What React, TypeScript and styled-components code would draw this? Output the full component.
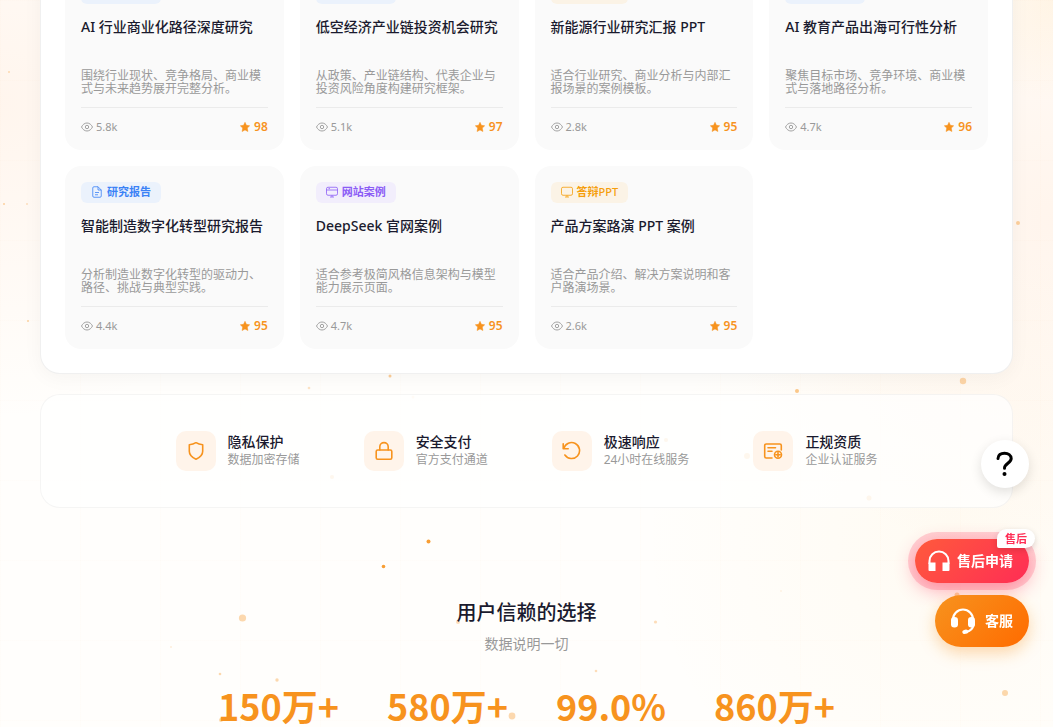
import React from "react";
import styled, { createGlobalStyle } from "styled-components";

const Global = createGlobalStyle`
  *, *::before, *::after { box-sizing: border-box; }
  html, body { margin: 0; height: 100%; }
  body {
    overflow: hidden;
    background: #fffdfa;
    color: #1a1a2e;
    font-family: "Noto Sans", "Noto Sans CJK SC", sans-serif;
    font-size: 14px;
  }
  h2, h3, h4, p, ul { margin: 0; padding: 0; }
  ul { list-style: none; }
`;

const Page = styled.div`
  position: relative;
  height: 100vh;
  overflow: hidden;
`;

const Backdrop = styled.div`
  position: absolute;
  inset: 0;
  background:
    linear-gradient(90deg, rgba(247, 147, 30, 0.012) 1px, transparent 1px) 0 0 / 80px 80px,
    linear-gradient(rgba(247, 147, 30, 0.012) 1px, transparent 1px) 0 0 / 80px 80px,
    radial-gradient(circle at 0% 14%, rgba(255, 170, 110, 0.1), transparent 26%),
    radial-gradient(circle at 100% 0%, rgba(255, 190, 80, 0.1), transparent 8%),
    radial-gradient(circle at 100% 30%, rgba(255, 170, 110, 0.11), transparent 30%),
    radial-gradient(circle at 90% 74%, rgba(255, 200, 90, 0.06), transparent 28%),
    #fffefc;
`;

const Particles = styled.svg`
  position: absolute;
  inset: 0;
  width: 100%;
  height: 100%;
  pointer-events: none;
`;

const Content = styled.main`
  position: relative;
  display: flex;
  flex-direction: column;
  gap: 20px;
  margin-top: -58px;
  padding: 0 40px;
`;

const CasePanel = styled.section`
  padding: 24px;
  background: #fff;
  border: 1px solid rgba(0, 0, 0, 0.06);
  border-radius: 20px;
  box-shadow: 0 4px 20px rgba(0, 0, 0, 0.04);
`;

const CaseGrid = styled.ul`
  display: grid;
  grid-template-columns: repeat(4, 1fr);
  gap: 16px;
`;

const CaseCard = styled.li`
  display: flex;
  flex-direction: column;
  align-items: flex-start;
  padding: 16px;
  background: #fafafa;
  border-radius: 16px;
`;

const Tag = styled.span<{ $color: string; $bg: string }>`
  display: inline-flex;
  align-items: center;
  height: 21px;
  padding: 0 10px 2px;
  border-radius: 6px;
  background: ${(p) => p.$bg};
  color: ${(p) => p.$color};
  font-size: 11px;
  font-weight: 600;
  line-height: 19px;

  svg { margin-right: 4px; }
`;

const Latin = styled.span`
  font-weight: 500;
`;

const CaseTitle = styled.h3`
  height: 40px;
  margin-top: 13px;
  font-size: 14px;
  font-weight: 500;
  line-height: 20px;
`;

const CaseText = styled.p`
  height: 26px;
  margin-top: 12px;
  color: #999;
  font-size: 12px;
  line-height: 13px;
`;

const CaseFooter = styled.div`
  display: flex;
  align-items: center;
  justify-content: space-between;
  width: 100%;
  margin-top: 12px;
  padding-top: 11px;
  border-top: 1px solid rgba(0, 0, 0, 0.06);
  line-height: 15px;
`;

const Views = styled.span`
  display: flex;
  align-items: center;
  gap: 3px;
  color: #999;
  font-size: 11px;
`;

const Score = styled.span`
  display: flex;
  align-items: center;
  gap: 4px;
  color: #f7931e;
  font-size: 12px;
  font-weight: 600;
`;

const TrustPanel = styled.ul`
  display: flex;
  justify-content: center;
  gap: 64px;
  padding: 36px;
  background: rgba(255, 255, 255, 0.7);
  border: 1px solid rgba(0, 0, 0, 0.04);
  border-radius: 20px;
`;

const TrustItem = styled.li`
  display: flex;
  align-items: center;
  gap: 12px;
`;

const TrustIcon = styled.span`
  display: flex;
  align-items: center;
  justify-content: center;
  width: 40px;
  height: 40px;
  border-radius: 10px;
  background: #fff4ea;
`;

const TrustTitle = styled.h4`
  font-size: 14px;
  font-weight: 500;
  line-height: 18px;
`;

const TrustText = styled.p`
  color: #999;
  font-size: 12px;
  line-height: 18px;
`;

const Stats = styled.section`
  display: flex;
  flex-direction: column;
  align-items: center;
  padding-top: 70px;
`;

const StatsTitle = styled.h2`
  font-size: 20px;
  font-weight: 500;
  line-height: 30px;
`;

const StatsText = styled.p`
  margin-top: 6px;
  color: #999;
  font-size: 14px;
  line-height: 20px;
`;

const StatsRow = styled.ul`
  display: flex;
  gap: 48px;
  margin-top: 26px;
  color: #f7931e;
  font-family: "Noto Sans CJK SC", sans-serif;
  font-size: 36px;
  font-weight: 700;
  line-height: 50px;
`;

const Floating = styled.aside`
  position: fixed;
  right: 24px;
  bottom: 80px;
  display: flex;
  flex-direction: column;
  align-items: flex-end;
  gap: 12px;
`;

const HelpButton = styled.button`
  display: flex;
  align-items: center;
  justify-content: center;
  width: 48px;
  height: 48px;
  margin-bottom: 39px;
  padding: 0;
  border: 0;
  border-radius: 50%;
  background: #fff;
  box-shadow: 0 4px 12px rgba(0, 0, 0, 0.12);
`;

const Pill = styled.button<{ $kind: "refund" | "service" }>`
  position: relative;
  display: flex;
  align-items: center;
  gap: ${(p) => (p.$kind === "refund" ? 6 : 8)}px;
  height: ${(p) => (p.$kind === "refund" ? 44 : 52)}px;
  padding: 0 16px 0 ${(p) => (p.$kind === "refund" ? 12 : 14)}px;
  border: 0;
  border-radius: 26px;
  background: ${(p) =>
    p.$kind === "refund"
      ? "linear-gradient(135deg, #ff5a3c, #ff2d55)"
      : "linear-gradient(135deg, #f7931e, #ff6b00)"};
  box-shadow: ${(p) =>
    p.$kind === "refund"
      ? "0 0 0 7px rgba(255, 45, 85, 0.2), 0 6px 20px rgba(255, 45, 85, 0.45)"
      : "0 6px 16px rgba(247, 147, 30, 0.35)"};
  color: #fff;
  font-family: inherit;
  font-size: 14px;
  font-weight: 700;
  line-height: 20px;
`;

const Badge = styled.span`
  position: absolute;
  top: -10px;
  right: -6px;
  height: 19px;
  padding: 0 8px;
  border-radius: 10px 10px 10px 2px;
  background: #fff;
  box-shadow: 0 2px 6px rgba(0, 0, 0, 0.14);
  color: #ff2d55;
  font-size: 11px;
  line-height: 19px;
`;

type Kind = "report" | "site" | "ppt";

const kinds: Record<Kind, { label: string; latin?: string; color: string; bg: string }> = {
  report: { label: "研究报告", color: "#3b82f6", bg: "#ebf2fc" },
  site: { label: "网站案例", color: "#8b5cf6", bg: "#f2eefc" },
  ppt: { label: "答辩", latin: "PPT", color: "#f59e0b", bg: "#fbf3e6" },
};

const cases: { kind: Kind; title: string; text: string; views: string; score: number }[] = [
  { kind: "report", title: "AI 行业商业化路径深度研究", text: "围绕行业现状、竞争格局、商业模式与未来趋势展开完整分析。", views: "5.8k", score: 98 },
  { kind: "report", title: "低空经济产业链投资机会研究", text: "从政策、产业链结构、代表企业与投资风险角度构建研究框架。", views: "5.1k", score: 97 },
  { kind: "ppt", title: "新能源行业研究汇报 PPT", text: "适合行业研究、商业分析与内部汇报场景的案例模板。", views: "2.8k", score: 95 },
  { kind: "report", title: "AI 教育产品出海可行性分析", text: "聚焦目标市场、竞争环境、商业模式与落地路径分析。", views: "4.7k", score: 96 },
  { kind: "report", title: "智能制造数字化转型研究报告", text: "分析制造业数字化转型的驱动力、路径、挑战与典型实践。", views: "4.4k", score: 95 },
  { kind: "site", title: "DeepSeek 官网案例", text: "适合参考极简风格信息架构与模型能力展示页面。", views: "4.7k", score: 95 },
  { kind: "ppt", title: "产品方案路演 PPT 案例", text: "适合产品介绍、解决方案说明和客户路演场景。", views: "2.6k", score: 95 },
];

const particles: [number, number, number, number][] = [
  [9, 72, 1, 0.3], [4, 204, 1, 0.4], [27, 204, 1, 0.25], [28, 321, 1, 0.4],
  [1018, 223, 2, 0.4], [390, 376, 1.5, 0.45], [309, 388, 1.3, 0.25], [413, 397, 1.5, 0.12],
  [797, 391, 2, 0.5], [963, 381, 3.2, 0.35], [428.5, 541.5, 2, 0.9], [383.5, 566.5, 1.8, 0.9],
  [242.5, 618, 3.6, 0.35], [458, 622, 2, 0.3], [655.5, 622, 1.6, 0.3], [781, 591, 0.7, 0.2],
  [220, 674, 1.3, 0.35], [277, 680, 1.7, 0.35], [596, 671, 1.3, 0.3], [512, 716, 3.4, 0.35],
  [221, 720, 2, 0.35], [1005, 693, 3, 0.35], [957, 595, 2.5, 0.4], [171, 647, 1, 0.15],
];

const fadedParticles: [number, number, number][] = [
  [332, 477, 2], [666, 440, 2], [747, 456, 3], [869, 498, 2.5],
];

function TagIcon({ kind }: { kind: Kind }) {
  return (
    <svg width="12" height="12" viewBox="0 0 24 24" fill="none" stroke="currentColor" strokeWidth="1.6" strokeLinejoin="round" aria-hidden="true">
      {kind === "report" ? (
        <path d="M14 1.5H6A2.5 2.5 0 0 0 3.5 4v16A2.5 2.5 0 0 0 6 22.5h12a2.5 2.5 0 0 0 2.5-2.5V8zM14 1.5V8h6.5M8 13h8M8 17.5h6" />
      ) : (
        <>
          <rect x="1" y="2.5" width="22" height="16" rx="3" />
          <path d="M8 22h8M12 18.5V22" />
          {kind === "site" && <path d="M1 8h22M5 5.3h3" />}
        </>
      )}
    </svg>
  );
}

function EyeIcon() {
  return (
    <svg width="12" height="12" viewBox="0 0 12 12" fill="none" stroke="currentColor" strokeWidth="0.9" aria-hidden="true">
      <path d="M.5 6C1.7 3.6 3.6 2 6 2s4.3 1.6 5.5 4C10.3 8.4 8.4 10 6 10S1.7 8.4.5 6z" />
      <circle cx="6" cy="6" r="1.7" />
    </svg>
  );
}

function StarIcon() {
  return (
    <svg width="10" height="10" viewBox="0 0 10 10" fill="currentColor" stroke="currentColor" strokeWidth="0.5" strokeLinejoin="round" aria-hidden="true">
      <path d="M5 .3l1.4 3 3.3.5-2.4 2.3.6 3.4L5 7.9 2.1 9.5l.6-3.4L.3 3.8l3.3-.5z" />
    </svg>
  );
}

const trustItems = [
  {
    title: "隐私保护",
    text: "数据加密存储",
    icon: <path d="M10 1.7c2 1.3 4.2 1.9 6.7 2v6.5c0 3.6-2.7 6.2-6.7 8-4-1.8-6.7-4.4-6.7-8V3.7c2.5-.1 4.7-.7 6.7-2z" />,
  },
  {
    title: "安全支付",
    text: "官方支付通道",
    icon: (
      <>
        <rect x="2.2" y="9" width="15.6" height="9.2" rx="1.5" />
        <path d="M5.8 9V5.8a4.2 4.2 0 0 1 8.4 0V9" />
      </>
    ),
  },
  {
    title: "极速响应",
    text: "24小时在线服务",
    icon: <path d="M1.2 2.8v5h5M1.8 7.600A8 8 0 1 1 2.9 14" />,
  },
  {
    title: "正规资质",
    text: "企业认证服务",
    icon: (
      <>
        <path d="M18.3 9V4.5a1.5 1.5 0 0 0-1.5-1.5H3.2a1.5 1.5 0 0 0-1.5 1.5v11A1.5 1.5 0 0 0 3.2 17H9M5 6.8h7.5M5 10.2h4" />
        <circle cx="15" cy="13.7" r="3.5" />
        <path d="M15 11.5v4.4M12.8 13.7h4.4" />
      </>
    ),
  },
];

const stats = ["150万+", "580万+", "99.0%", "860万+"];

export default function App() {
  return (
    <Page>
      <Global />
      <Backdrop />
      <Particles aria-hidden="true">
        {particles.map(([x, y, r, o], i) => (
          <circle key={i} cx={x} cy={y} r={r} fill="#f7931e" opacity={o} />
        ))}
      </Particles>
      <Content>
        <CasePanel>
          <CaseGrid>
            {cases.map((c) => {
              const kind = kinds[c.kind];
              return (
                <CaseCard key={c.title}>
                  <Tag $color={kind.color} $bg={kind.bg}>
                    <TagIcon kind={c.kind} />
                    {kind.label}
                    {kind.latin && <Latin>{kind.latin}</Latin>}
                  </Tag>
                  <CaseTitle>{c.title}</CaseTitle>
                  <CaseText>{c.text}</CaseText>
                  <CaseFooter>
                    <Views><EyeIcon />{c.views}</Views>
                    <Score><StarIcon />{c.score}</Score>
                  </CaseFooter>
                </CaseCard>
              );
            })}
          </CaseGrid>
        </CasePanel>
        <TrustPanel>
          {trustItems.map((t) => (
            <TrustItem key={t.title}>
              <TrustIcon>
                <svg width="20" height="20" viewBox="0 0 20 20" fill="none" stroke="#f7931e" strokeWidth="1.6" strokeLinecap="round" strokeLinejoin="round" aria-hidden="true">
                  {t.icon}
                </svg>
              </TrustIcon>
              <div>
                <TrustTitle>{t.title}</TrustTitle>
                <TrustText>{t.text}</TrustText>
              </div>
            </TrustItem>
          ))}
        </TrustPanel>
        <Stats>
          <StatsTitle>用户信赖的选择</StatsTitle>
          <StatsText>数据说明一切</StatsText>
          <StatsRow>
            {stats.map((s) => (
              <li key={s}>{s}</li>
            ))}
          </StatsRow>
        </Stats>
      </Content>
      <Particles aria-hidden="true">
        {fadedParticles.map(([x, y, r], i) => (
          <circle key={i} cx={x} cy={y} r={r} fill="#f7931e" opacity={0.07} />
        ))}
      </Particles>
      <Floating>
        <HelpButton aria-label="帮助">
          <svg width="24" height="28" viewBox="0 0 24 28" fill="none" stroke="#000" strokeWidth="3" strokeLinecap="round" aria-hidden="true">
            <path d="M5 8.5C5 5 7.8 3.2 11.5 3.2s6.7 2 6.7 5.4c0 4.4-6.7 5-6.7 9.600" />
            <circle cx="11.5" cy="24" r="2" fill="#000" stroke="none" />
          </svg>
        </HelpButton>
        <Pill $kind="refund">
          <svg width="24" height="24" viewBox="0 0 24 24" aria-hidden="true">
            <path d="M2.5 15V12a9.5 9.5 0 0 1 19 0v3" fill="none" stroke="#fff" strokeWidth="2" />
            <path d="M1.5 13.5h7V22h-6a1 1 0 0 1-1-1zM15.5 13.5h7V21a1 1 0 0 1-1 1h-6z" fill="#fff" />
          </svg>
          售后申请
          <Badge>售后</Badge>
        </Pill>
        <Pill $kind="service">
          <svg width="28" height="28" viewBox="0 0 28 28" aria-hidden="true">
            <path d="M4 12.5a10 10 0 0 1 20 0" fill="none" stroke="#fff" strokeWidth="2.2" />
            <rect x="2" y="10" width="7" height="10.5" rx="3.3" fill="#fff" />
            <rect x="19" y="10" width="7" height="10.5" rx="3.3" fill="#fff" />
            <path d="M24.5 18c-.6 3.8-3.2 5.9-7 7" fill="none" stroke="#fff" strokeWidth="2" />
            <ellipse cx="16.3" cy="24.8" rx="3" ry="2.1" fill="#fff" transform="rotate(-12 16.3 24.8)" />
          </svg>
          客服
        </Pill>
      </Floating>
    </Page>
  );
}
